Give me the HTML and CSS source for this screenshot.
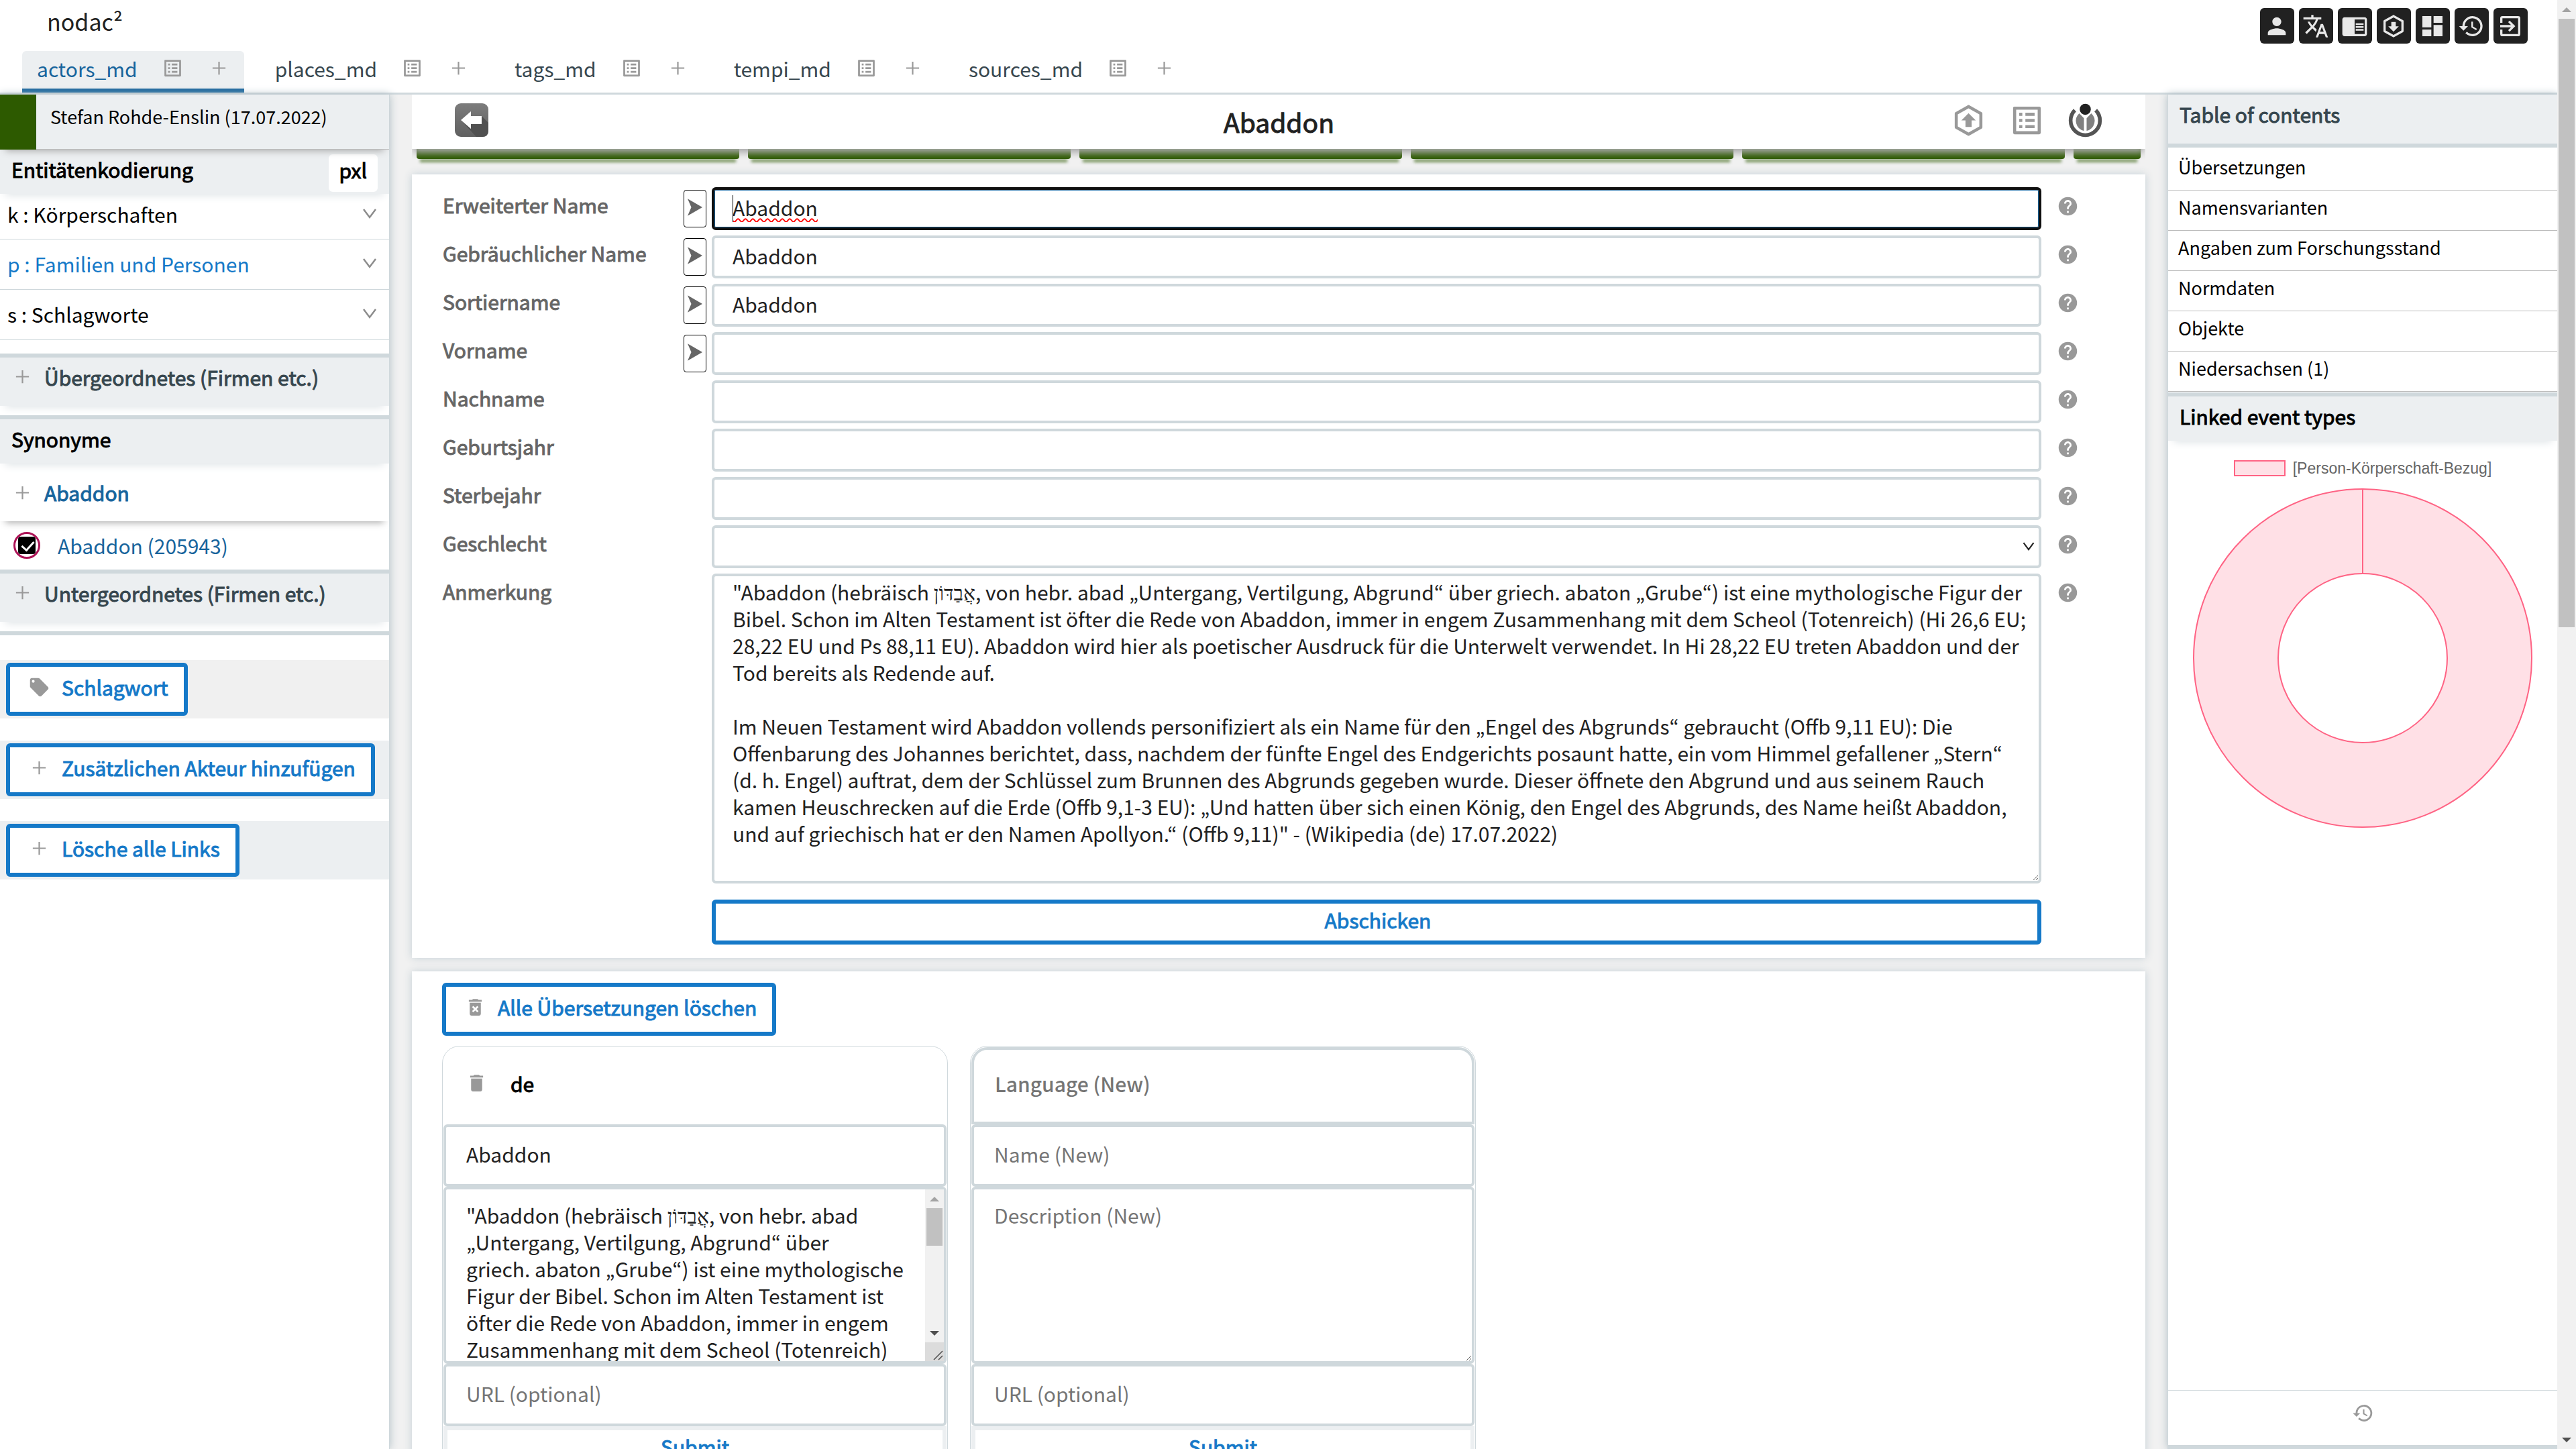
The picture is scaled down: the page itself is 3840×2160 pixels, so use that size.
FILE: index.html
```
<!DOCTYPE html>
<html lang="de">
<head>
<meta charset="utf-8">
<meta name="viewport" content="width=device-width, initial-scale=1">
<title>Abaddon – nodac²</title>
<link rel="stylesheet" href="styles.css">
</head>
<body>
<svg class="sprite" aria-hidden="true">
  <symbol id="i-list" viewBox="0 0 24 24"><path d="M19 5v14H5V5h14m1.1-2H3.9c-.5 0-.9.4-.9.9v16.2c0 .4.4.9.9.9h16.2c.4 0 .9-.5.9-.9V3.9c0-.5-.5-.9-.9-.9zM11 7h6v2h-6V7zm0 4h6v2h-6v-2zm0 4h6v2h-6v-2zM7 7h2v2H7V7zm0 4h2v2H7v-2zm0 4h2v2H7v-2z"/></symbol>
  <symbol id="i-plus" viewBox="0 0 24 24"><path d="M19 12.8h-6.200V19h-1.600v-6.200H5v-1.600h6.200V5h1.600v6.200H19z"/></symbol>
  <symbol id="i-help" viewBox="0 0 24 24"><path d="M12 2C6.480 2 2 6.480 2 12s4.480 10 10 10 10-4.480 10-10S17.520 2 12 2zm1 17h-2v-2h2v2zm2.070-7.750l-.9.920C13.450 12.900 13 13.500 13 15h-2v-.5c0-1.100.450-2.100 1.170-2.830l1.240-1.260c.370-.360.590-.860.590-1.410 0-1.100-.9-2-2-2s-2 .9-2 2H8c0-2.210 1.790-4 4-4s4 1.790 4 4c0 .880-.360 1.680-.930 2.250z"/></symbol>
  <symbol id="i-history" viewBox="0 0 24 24"><path d="M13 3a9 9 0 0 0-9 9H1l3.890 3.890.070.140L9 12H6a7 7 0 1 1 2.060 4.940l-1.420 1.420A9 9 0 1 0 13 3zm-1 5v5l4.280 2.540.720-1.210-3.500-2.080V8H12z"/></symbol>
  <symbol id="i-chevron" viewBox="0 0 24 24"><path d="M3 5l9 12 9-12" fill="none" stroke="currentColor" stroke-width="2.500"/></symbol>
  <symbol id="i-trash" viewBox="0 0 24 24"><path d="M6 19c0 1.100.9 2 2 2h8c1.100 0 2-.9 2-2V7H6v12zM19 4h-3.500l-1-1h-5l-1 1H5v2h14V4z"/></symbol>
  <symbol id="i-hex" viewBox="0 0 24 24"><path d="M21 16.500c0 .380-.210.710-.530.880l-7.900 4.440c-.160.120-.360.180-.570.180s-.410-.060-.570-.180l-7.900-4.440A1 1 0 0 1 3 16.500v-9c0-.380.210-.710.530-.880l7.900-4.440c.160-.120.360-.180.570-.180s.410.060.570.180l7.900 4.440c.320.170.530.500.530.880v9zM12 4.150L5 8.090v7.820l7 3.940 7-3.940V8.090l-7-3.940z"/></symbol>
</svg>

<div class="shell">
  <div class="app">
    <header class="topbar">
      <div class="brand-row">
        <a class="brand" href="#">nodac²</a>
        <nav class="tools" aria-label="Werkzeuge">
          <button class="tool" type="button" aria-label="Konto"><svg viewBox="0 0 24 24"><path d="M12 12c2.210 0 4-1.790 4-4s-1.790-4-4-4-4 1.790-4 4 1.790 4 4 4zm0 2c-2.670 0-8 1.340-8 4v2h16v-2c0-2.660-5.330-4-8-4z"/></svg></button>
          <button class="tool" type="button" aria-label="Sprache"><svg viewBox="0 0 24 24"><path d="M12.870 15.070l-2.540-2.510.030-.030c1.740-1.940 2.980-4.170 3.710-6.530H17V4h-7V2H8v2H1v1.990h11.170C11.500 7.920 10.440 9.750 9 11.350 8.070 10.320 7.300 9.190 6.690 8h-2c.730 1.630 1.730 3.170 2.980 4.560l-5.090 5.020L4 19l5-5 3.110 3.110.760-2.040zM18.500 10h-2L12 22h2l1.120-3h4.750L21 22h2l-4.500-12zm-2.620 7l1.620-4.330L19.120 17h-3.240z"/></svg></button>
          <button class="tool" type="button" aria-label="Ansicht"><svg viewBox="0 0 24 24"><path d="M13 12h7v1.500h-7zm0-2.500h7V11h-7zm0 5h7V16h-7zM21 4H3c-1.100 0-2 .9-2 2v13c0 1.100.9 2 2 2h18c1.100 0 2-.9 2-2V6c0-1.100-.9-2-2-2zm0 15h-9V6h9v13z"/></svg></button>
          <button class="tool" type="button" aria-label="Import"><svg viewBox="0 0 24 24"><use href="#i-hex"/><path d="M10 8.300h4v3.900h2.700L12 16.900l-4.700-4.700H10z"/></svg></button>
          <button class="tool" type="button" aria-label="Dashboard"><svg viewBox="0 0 24 24"><path d="M3 13h8V3H3v10zm0 8h8v-6H3v6zm10 0h8V11h-8v10zm0-18v6h8V3h-8z"/></svg></button>
          <button class="tool" type="button" aria-label="Verlauf"><svg><use href="#i-history"/></svg></button>
          <button class="tool" type="button" aria-label="Abmelden"><svg viewBox="0 0 24 24"><path d="M10.090 15.590L11.500 17l5-5-5-5-1.410 1.410L12.670 11H3v2h9.670l-2.580 2.590zM19 3H5a2 2 0 0 0-2 2v4h2V5h14v14H5v-4H3v4a2 2 0 0 0 2 2h14a2 2 0 0 0 2-2V5a2 2 0 0 0-2-2z"/></svg></button>
        </nav>
      </div>
      <nav class="tabs" aria-label="Bereiche">
        <div class="tab tab-active"><a href="#">actors_md</a><svg class="icon"><use href="#i-list"/></svg><svg class="icon"><use href="#i-plus"/></svg></div>
        <div class="tab"><a href="#">places_md</a><svg class="icon"><use href="#i-list"/></svg><svg class="icon"><use href="#i-plus"/></svg></div>
        <div class="tab"><a href="#">tags_md</a><svg class="icon"><use href="#i-list"/></svg><svg class="icon"><use href="#i-plus"/></svg></div>
        <div class="tab"><a href="#">tempi_md</a><svg class="icon"><use href="#i-list"/></svg><svg class="icon"><use href="#i-plus"/></svg></div>
        <div class="tab"><a href="#">sources_md</a><svg class="icon"><use href="#i-list"/></svg><svg class="icon"><use href="#i-plus"/></svg></div>
      </nav>
    </header>

    <div class="columns">
      <aside class="side">
        <div class="editor"><span class="editor-state"></span><span class="editor-name">Stefan Rohde-Enslin (17.07.2022)</span></div>
        <div class="heading"><h2>Entitätenkodierung</h2><button class="pxl" type="button">pxl</button></div>
        <ul class="codes">
          <li><a href="#">k : Körperschaften</a><svg class="chevron"><use href="#i-chevron"/></svg></li>
          <li><a class="current" href="#">p : Familien und Personen</a><svg class="chevron"><use href="#i-chevron"/></svg></li>
          <li><a href="#">s : Schlagworte</a><svg class="chevron"><use href="#i-chevron"/></svg></li>
        </ul>
        <section class="group group-open"><div class="group-head"><svg class="icon"><use href="#i-plus"/></svg><h2>Übergeordnetes (Firmen etc.)</h2></div></section>
        <section class="group">
          <div class="heading"><h2>Synonyme</h2></div>
          <div class="entity"><svg class="icon"><use href="#i-plus"/></svg><a class="strong" href="#">Abaddon</a></div>
          <div class="variant"><span class="ring"><input type="checkbox" id="v205943" checked></span><label for="v205943">Abaddon (205943)</label></div>
        </section>
        <section class="group group-open group-last"><div class="group-head"><svg class="icon"><use href="#i-plus"/></svg><h2>Untergeordnetes (Firmen etc.)</h2></div></section>
        <div class="actions">
          <div class="band band-plain"><button class="btn" type="button"><svg class="icon" viewBox="0 0 24 24"><path d="M5.500 7a1.500 1.500 0 1 1 0-3 1.500 1.500 0 0 1 0 3m15.910 4.580l-9-9C12.050 2.220 11.550 2 11 2H4c-1.110 0-2 .890-2 2v7c0 .550.220 1.050.590 1.410l8.990 9c.370.360.870.590 1.420.590s1.050-.230 1.410-.590l7-7c.370-.360.590-.860.590-1.410 0-.560-.230-1.060-.590-1.420z"/></svg>Schlagwort</button></div>
          <div class="band"><button class="btn" type="button"><svg class="icon"><use href="#i-plus"/></svg>Zusätzlichen Akteur hinzufügen</button></div>
          <div class="band"><button class="btn" type="button"><svg class="icon"><use href="#i-plus"/></svg>Lösche alle Links</button></div>
        </div>
      </aside>

      <main class="main">
        <div class="title-bar">
          <a href="#" aria-label="Zurück"><svg class="back" viewBox="0 0 52 52"><defs><linearGradient id="g" x2="0" y2="1"><stop offset="0" stop-color="#7c7c7c"/><stop offset="1" stop-color="#606060"/></linearGradient></defs><rect x="1" y="1" width="50" height="50" rx="9" fill="url(#g)"/><path d="M41 20l10 10v12q0 9-9 9h-9L10 26z" fill="#505050"/><path d="M10 26l15-13v7h16v12H25v7z" fill="#fff"/></svg></a>
          <h1>Abaddon</h1>
          <div class="title-tools">
            <svg class="icon-lg" viewBox="0 0 24 24"><use href="#i-hex"/><path d="M14 16.200h-4V12H7.300L12 7.300l4.700 4.700H14z"/></svg>
            <svg class="icon-lg"><use href="#i-list"/></svg>
            <svg class="icon-lg" viewBox="-8 -8 166 166"><path d="M28 29A66 66 0 1 0 122 29" fill="none" stroke="#545454" stroke-width="17"/><path d="M48 43l21 22v57A46 46 0 0 1 48 43M102 43L81 65v57A46 46 0 0 0 102 43" fill="#808080"/><circle cx="75" cy="25" r="25" fill="#212121"/></svg>
          </div>
        </div>
        <div class="progress"><i></i><i></i><i></i><i></i><i></i><i class="rest"></i></div>

        <form class="card form">
          <div class="row"><label for="f1">Erweiterter Name</label><button class="copy" type="button" aria-label="Übernehmen"><svg viewBox="0 0 24 28"><path d="M0 0l24 14L0 28l6-14z"/></svg></button><span class="control"><input class="focused" id="f1" value="Abaddon"><i class="caret"></i></span><svg class="icon help"><use href="#i-help"/></svg></div>
          <div class="row"><label for="f2">Gebräuchlicher Name</label><button class="copy" type="button" aria-label="Übernehmen"><svg viewBox="0 0 24 28"><path d="M0 0l24 14L0 28l6-14z"/></svg></button><span class="control"><input id="f2" value="Abaddon"></span><svg class="icon help"><use href="#i-help"/></svg></div>
          <div class="row"><label for="f3">Sortiername</label><button class="copy" type="button" aria-label="Übernehmen"><svg viewBox="0 0 24 28"><path d="M0 0l24 14L0 28l6-14z"/></svg></button><span class="control"><input id="f3" value="Abaddon"></span><svg class="icon help"><use href="#i-help"/></svg></div>
          <div class="row"><label for="f4">Vorname</label><button class="copy" type="button" aria-label="Übernehmen"><svg viewBox="0 0 24 28"><path d="M0 0l24 14L0 28l6-14z"/></svg></button><span class="control"><input id="f4"></span><svg class="icon help"><use href="#i-help"/></svg></div>
          <div class="row"><label for="f5">Nachname</label><span class="control"><input id="f5"></span><svg class="icon help"><use href="#i-help"/></svg></div>
          <div class="row"><label for="f6">Geburtsjahr</label><span class="control"><input id="f6"></span><svg class="icon help"><use href="#i-help"/></svg></div>
          <div class="row"><label for="f7">Sterbejahr</label><span class="control"><input id="f7"></span><svg class="icon help"><use href="#i-help"/></svg></div>
          <div class="row"><label for="f8">Geschlecht</label><span class="control"><select id="f8"><option></option></select><svg class="select-arrow"><use href="#i-chevron"/></svg></span><svg class="icon help"><use href="#i-help"/></svg></div>
          <div class="row"><label for="f9">Anmerkung</label><span class="control"><textarea class="note" id="f9" spellcheck="false">"Abaddon (hebräisch אֲבַדּוֹן, von hebr. abad „Untergang, Vertilgung, Abgrund“ über griech.&nbsp;abaton „Grube“) ist eine mythologische Figur der Bibel. Schon im Alten Testament ist öfter die Rede von Abaddon, immer in engem Zusammenhang mit dem Scheol (Totenreich) (Hi 26,6 EU; 28,22 EU und Ps 88,11 EU). Abaddon wird hier als poetischer Ausdruck für die Unterwelt verwendet. In Hi 28,22 EU treten Abaddon und der Tod bereits als Redende auf.

Im Neuen Testament wird Abaddon vollends personifiziert als ein Name für den „Engel des Abgrunds“ gebraucht (Offb 9,11 EU): Die Offenbarung des Johannes berichtet, dass, nachdem der fünfte Engel des Endgerichts posaunt hatte, ein vom Himmel gefallener „Stern“ (d.&nbsp;h. Engel) auftrat, dem der Schlüssel zum Brunnen des Abgrunds gegeben wurde. Dieser öffnete den Abgrund und aus seinem Rauch kamen Heuschrecken auf die Erde (Offb 9,1-3 EU): „Und hatten über sich einen König, den Engel des Abgrunds, des Name heißt Abaddon, und auf griechisch hat er den Namen Apollyon.“ (Offb 9,11)" - (Wikipedia (de) 17.07.2022)</textarea></span><svg class="icon help"><use href="#i-help"/></svg></div>
          <div class="row row-send"><button class="btn btn-send" type="submit">Abschicken</button></div>
        </form>

        <section class="card translations">
          <button class="btn" type="button"><svg class="icon" viewBox="0 0 24 24"><path d="M6 19c0 1.100.9 2 2 2h8c1.100 0 2-.9 2-2V7H6v12zm2.460-7.120l1.410-1.410L12 12.590l2.120-2.120 1.410 1.410L13.410 14l2.120 2.120-1.410 1.410L12 15.410l-2.120 2.120-1.410-1.410L10.590 14l-2.130-2.120zM15.500 4l-1-1h-5l-1 1H5v2h14V4z"/></svg>Alle Übersetzungen löschen</button>
          <div class="langs">
            <form class="lang">
              <div class="lang-head"><svg class="icon"><use href="#i-trash"/></svg><h3>de</h3></div>
              <input aria-label="Name" value="Abaddon">
              <div class="scroll-box">
                <textarea aria-label="Beschreibung" spellcheck="false">"Abaddon (hebräisch אֲבַדּוֹן, von hebr. abad „Untergang, Vertilgung, Abgrund“ über griech.&nbsp;abaton „Grube“) ist eine mythologische Figur der Bibel. Schon im Alten Testament ist öfter die Rede von Abaddon, immer in engem Zusammenhang mit dem Scheol (Totenreich) (Hi 26,6 EU;</textarea>
                <div class="bar bar-small" aria-hidden="true"><i class="up"></i><i class="thumb"></i><i class="down"></i><svg class="grip" viewBox="0 0 28 28"><path d="M13 26L26 13M20 26l6-6" stroke="#505050" stroke-width="1.500"/></svg></div>
              </div>
              <input aria-label="URL" placeholder="URL (optional)">
              <button class="submit" type="submit">Submit</button>
            </form>
            <form class="lang">
              <input class="lang-new" aria-label="Sprache" placeholder="Language (New)">
              <input aria-label="Name" placeholder="Name (New)">
              <textarea aria-label="Beschreibung" placeholder="Description (New)"></textarea>
              <input aria-label="URL" placeholder="URL (optional)">
              <button class="submit" type="submit">Submit</button>
            </form>
          </div>
        </section>
      </main>

      <aside class="toc">
        <div class="toc-head"><h2>Table of contents</h2></div>
        <ul class="toc-list">
          <li><a href="#">Übersetzungen</a></li>
          <li><a href="#">Namensvarianten</a></li>
          <li><a href="#">Angaben zum Forschungsstand</a></li>
          <li><a href="#">Normdaten</a></li>
          <li><a href="#">Objekte</a></li>
          <li><a href="#">Niedersachsen (1)</a></li>
        </ul>
        <section class="group">
          <div class="heading"><h2>Linked event types</h2></div>
          <figure class="chart">
            <figcaption><i></i>[Person-Körperschaft-Bezug]</figcaption>
            <svg viewBox="0 0 508 508"><path fill-rule="evenodd" d="M254 2a252 252 0 1 1 0 504a252 252 0 1 1 0-504zM254 128a126 126 0 1 0 0 252a126 126 0 1 0 0-252z"/><path d="M254 2v126"/></svg>
          </figure>
        </section>
        <div class="toc-foot"><svg class="icon"><use href="#i-history"/></svg></div>
      </aside>
    </div>
  </div>
  <div class="bar bar-page" aria-hidden="true"><i class="up"></i><i class="thumb"></i><i class="down"></i></div>
</div>
</body>
</html>
```

FILE: styles.css
```
:root {
  --line: #cfd8dc;
  --tint: #eceff1;
  --blue: #1579c8;
  --deep: #17649c;
  --slate: #37474f;
  --grey: #999;
  --green: #2d5a00;
}

* { box-sizing: border-box; }

body {
  margin: 0;
  background: #fff;
  color: #000;
  font: 30px/44px "Noto Sans CJK KR", "Liberation Serif", sans-serif;
}

h1, h2, h3, ul, figure { margin: 0; padding: 0; font-weight: 400; }
h1, h2, h3, .strong, .btn, .submit, .pxl, .row label { -webkit-text-stroke: 1px currentColor; }
h2, h3 { font-size: 30px; }
ul { list-style: none; }
a { color: inherit; text-decoration: none; }
button, input, select, textarea { margin: 0; font: inherit; color: #212121; }
button { cursor: pointer; }
i { display: block; }
svg { display: block; fill: currentColor; flex: none; }

.sprite { position: absolute; width: 0; height: 0; }
.icon { width: 33px; height: 33px; color: var(--grey); }
.icon-lg { width: 55px; height: 55px; }

/* Shell */
.shell { display: flex; height: 100vh; overflow: hidden; }
.app { flex: 1; min-width: 0; display: flex; flex-direction: column; }
.columns { flex: 1; min-height: 0; display: flex; background: #f1f1f1; }

.topbar { border-bottom: 3px solid var(--line); }
.brand-row { display: flex; justify-content: space-between; align-items: flex-start; height: 76px; padding: 0 44px 0 70px; }
.brand { margin-top: 10px; font-size: 34px; color: #212121; }
.tools { display: flex; gap: 7px; margin-top: 12px; }
.tool { width: 51px; height: 53px; padding: 5px; border: 0; border-radius: 6px; background: #212121; color: #e8e8e8; }
.tool svg { width: 40px; height: 40px; }

.tabs { display: flex; gap: 24px; padding-left: 33px; }
.tab { display: flex; align-items: center; height: 62px; padding: 0 21px 11px 22px; border-radius: 6px 6px 0 0; color: var(--slate); }
.tab .icon { margin-left: 36px; }
.tab-active { background: var(--tint); box-shadow: inset 0 -6px 0 var(--deep); color: var(--deep); }

/* Left column */
.side { width: 581px; flex: none; background: #fff; border-right: 1px solid var(--line); box-shadow: 0 0 12px #b0bec5; }
.editor { position: relative; display: flex; height: 82px; background: var(--tint); border-bottom: 1px solid #bbb; box-shadow: 0 10px 10px -8px #aaa; }
.editor-state { width: 54px; margin-bottom: -1px; background: var(--green); }
.editor-name { margin: 11px 0 0 21px; font-size: 27px; }
.heading { display: flex; justify-content: space-between; height: 66px; padding: 7px 17px 0 17px; background: var(--tint); box-shadow: 0 10px 12px -8px #dde3e6; }
.pxl { height: 56px; padding: 0 16px 10px; border: 0; border-radius: 6px; background: #fff; color: #000; }
.codes { padding-bottom: 20px; }
.codes li { display: flex; justify-content: space-between; align-items: center; height: 75px; padding: 0 17px 2px 11px; border-bottom: 1px solid var(--line); }
.codes li:first-child { height: 68px; padding-bottom: 8px; }
.codes .current { color: var(--blue); }
.chevron { width: 24px; height: 24px; color: #8c8c8c; }

.group { border-top: 6px solid var(--line); }
.group-open { padding-bottom: 14px; }
.group-last { border-bottom: 6px solid var(--line); }
.group-head { display: flex; align-items: center; gap: 16px; height: 72px; padding: 0 17px 15px; background: var(--tint); color: var(--slate); box-shadow: 0 10px 12px -8px #dde3e6; }
.entity { display: flex; align-items: center; gap: 16px; height: 86px; padding: 0 17px; color: var(--deep); box-shadow: 0 10px 10px -8px #aaa; }
.variant { display: flex; align-items: center; gap: 26px; height: 72px; padding: 0 20px; color: var(--deep); }
.ring { display: flex; align-items: center; justify-content: center; width: 40px; height: 40px; border: 3px solid #ad1457; border-radius: 50%; }
.ring input { appearance: none; position: relative; flex: none; width: 26px; height: 26px; border-radius: 4px; background: #000; }
.ring input::after { content: ""; position: absolute; left: 9px; top: 3px; width: 8px; height: 15px; border: solid #fff; border-width: 0 3px 3px 0; transform: rotate(42deg); }

.actions { display: grid; gap: 33px; padding-top: 37px; }
.band { display: flex; height: 87px; padding: 4px 9px; background: var(--tint); }
.band-plain { background: #f0f0f0; }
.btn { display: flex; align-items: center; gap: 17px; height: 79px; padding: 0 23px 7px 27px; border: 6px solid var(--blue); border-radius: 6px; background: #fff; color: var(--blue); }

/* Centre column */
.main { flex: 1; min-width: 0; padding: 0 33px; overflow: hidden; }
.title-bar { position: relative; z-index: 1; display: grid; grid-template-columns: 1fr auto 1fr; align-items: center; height: 81px; padding: 0 62px 5px 63px; background: #fff; box-shadow: 0 8px 10px -2px #aaa; clip-path: inset(0 0 -16px 0); }
.title-bar h1 { padding-top: 3px; font-size: 39px; color: #212121; }
.back { width: 52px; height: 52px; }
.title-tools { display: flex; gap: 32px; justify-self: end; color: var(--grey); }
.progress { display: flex; gap: 13px; margin: 0 7px 23px; }
.progress i { flex: 481; height: 15px; border-radius: 0 0 4px 4px; background: var(--green); box-shadow: 0 10px 4px -5px #2d5a0099; }
.progress .rest { flex: 100; }

.card { background: #fff; box-shadow: 0 0 12px #c3cfd5; }
.form { display: grid; gap: 8px; padding: 19px 99px 20px 46px; }
.row { display: flex; align-items: flex-start; }
.row label { width: 359px; padding-top: 4px; color: #666; }
.copy { width: 34px; height: 56px; margin: 4px 0 0; padding: 0 5px 4px; border: 1px solid #000; border-radius: 4px; background: #fff; color: #666; }
.copy svg { width: 22px; height: 28px; }
.control { position: relative; flex: 1; margin-left: 42px; }
.copy + .control { margin-left: 8px; }
.help { margin: 12px 0 0 23px; }

input:not([type]), select, textarea { display: block; width: 100%; border: 4px solid var(--line); border-radius: 6px; background: #fff; outline: 0; }
::placeholder { color: #757575; opacity: 1; }
.row input, .row select { height: 64px; padding: 0 27px 4px; }
.row .focused { border-color: #101010; box-shadow: inset 0 0 0 1px var(--deep); text-decoration: underline wavy #f00 2px; text-underline-offset: 3px; }
.caret { position: absolute; left: 31px; top: 12px; width: 1px; height: 40px; background: #000; }
.row select { appearance: none; }
.select-arrow { position: absolute; right: 9px; top: 22px; width: 20px; height: 20px; color: #212121; }
.row .note { height: 462px; padding: 3px 10px 3px 27px; line-height: 40px; }
.row-send { margin-top: 16px; padding: 0 56px 0 401px; }
.btn-send { flex: 1; justify-content: center; height: 67px; }

.translations { margin-top: 20px; padding: 17px 45px; }
.langs { display: flex; gap: 33px; margin-top: 15px; }
.lang { width: 754px; padding: 1px; border: 1px solid var(--line); border-radius: 26px 26px 0 0; }
.lang-head { display: flex; align-items: center; gap: 34px; height: 115px; padding: 0 33px 8px; }
.lang input { height: 93px; padding: 0 30px 6px; }
.lang textarea { height: 264px; padding: 18px 30px; line-height: 40px; }
.lang .lang-new { height: 115px; padding: 0 31px 8px; border-radius: 24px 24px 0 0; font-weight: 500; }
.scroll-box { display: flex; height: 264px; border: 4px solid var(--line); border-radius: 6px; }
.scroll-box textarea { flex: 1; min-width: 0; height: 256px; padding-right: 22px; border: 0; resize: none; overflow: hidden; }
.submit { display: block; width: 100%; height: 80px; padding: 0 0 20px; border: 6px solid var(--tint); background: #fff; color: var(--blue); }

/* Right column */
.toc { display: flex; flex-direction: column; width: 581px; flex: none; background: #fff; border-left: 1px solid var(--line); box-shadow: 0 0 12px #b0bec5; }
.toc-head { height: 79px; padding: 7px 17px; background: var(--tint); border-bottom: 6px solid var(--line); color: var(--slate); }
.toc-list { padding: 4px 0 1px; }
.toc-list li { height: 60px; padding: 3px 15px; border-bottom: 1px solid #bbb; font-size: 27px; }
.chart { display: flex; flex-direction: column; align-items: center; gap: 16px; padding-top: 28px; }
.chart figcaption { display: flex; align-items: center; gap: 11px; font: 23px/26px "Liberation Sans", sans-serif; color: #666; }
.chart figcaption i { width: 77px; height: 24px; border: 2px solid #ff6384; background: #ffe0e6; }
.chart svg { width: 508px; height: 508px; fill: #ffe0e6; stroke: #ff6384; stroke-width: 2; }
.toc-foot { display: flex; justify-content: center; height: 88px; margin-top: auto; padding-top: 17px; border-top: 1px solid var(--line); border-bottom: 6px solid var(--line); }

/* Scroll bars */
.bar { display: flex; flex-direction: column; align-items: center; flex: none; width: 28px; background: #f1f1f1; }
.bar .up, .bar .down { border: 7px solid transparent; border-top-width: 0; border-bottom: 7px solid #a3a3a3; margin: 11px 0 10px; }
.bar .down { border-top: 7px solid #505050; border-bottom-width: 0; margin-top: auto; }
.bar .thumb { width: 24px; height: 42%; background: #c1c1c1; }
.bar-small .thumb { height: 56px; }
.grip { width: 28px; height: 28px; background: #dcdcdc; }
```
